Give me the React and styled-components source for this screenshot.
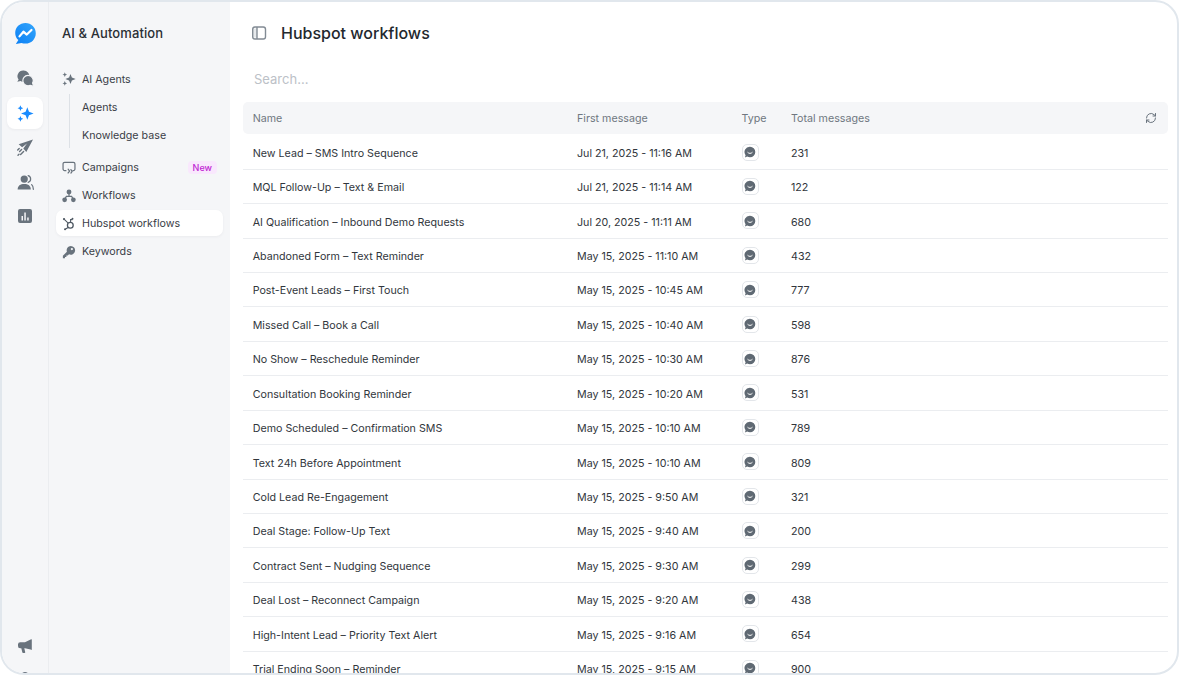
import React from "react";
import styled, { createGlobalStyle } from "styled-components";

const Global = createGlobalStyle`
  html, body { margin: 0; padding: 0; background: #fff; height: 100%; overflow: hidden; }
  #root { height: 100%; }
  * { box-sizing: border-box; }
`;

const Frame = styled.div`
  width: 1179px; height: 675px; display: flex; overflow: hidden;
  border: 2px solid #e1e7ed; border-radius: 24px; background: #fff;
  font-family: Inter, "Liberation Sans", sans-serif; color: #2b3036;
`;
const Rail = styled.nav`
  width: 47px; flex: none; background: #f5f6f8; border-right: 1px solid #ebedf0;
  display: flex; flex-direction: column; align-items: center; padding-top: 21px;
`;
const RailButton = styled.div`
  width: 36px; height: ${p => p.$h || 32}px; flex: none; display: flex; align-items: center; justify-content: center;
  border-radius: 8px; margin-top: ${p => p.$mt || 0}px;
  background: ${p => (p.$active ? "#fff" : "transparent")};
  box-shadow: ${p => (p.$active ? "0 1px 3px rgba(30,40,60,.05)" : "none")};
`;
const RailBottom = styled.div`
  margin-top: auto; margin-bottom: -17px; display: flex; flex-direction: column; align-items: center; gap: 10px;
`;
const Avatar = styled.div`
  width: 12px; height: 18px; border-radius: 50%; background: #6b7580;
`;
const Side = styled.aside`
  width: 181px; flex: none; background: #f5f6f8; padding: 21px 7px 0;
`;
const SideTitle = styled.h2`
  margin: 0 0 23px 6px; font-size: 13px; line-height: 20px; font-weight: 500; color: #2a2f35; letter-spacing: .1px;
`;
const Item = styled.div`
  height: 26px; margin-bottom: 2px; display: flex; align-items: center; padding: ${p => (p.$low ? "1px" : "0")} 0 0 6px; gap: 6px;
  border-radius: 7px; font-size: 10.7px; color: #3a4047;
  background: ${p => (p.$active ? "#fff" : "transparent")};
  box-shadow: ${p => (p.$active ? "0 1px 3px rgba(30,40,60,.05)" : "none")};
`;
const ItemIcon = styled.span`
  width: 14px; height: 14px; display: flex; flex: none;
`;
const SubList = styled.div`
  margin: 0 0 6px 13px; padding: 0 0 0 12px; border-left: 1px solid #dde1e6;
`;
const SubItem = styled.div`
  height: 26px; margin-bottom: 2px; display: flex; align-items: center; font-size: 10.7px; color: #3a4047;
`;
const Badge = styled.span`
  margin-left: auto; margin-right: 6px; height: 13px; padding: 0 5px; border-radius: 4px; display: flex; align-items: center;
  background: #f9e8fd; color: #c026d3; font-size: 9px; font-weight: 500;
`;
const Main = styled.main`
  flex: 1; min-width: 0; padding: 0 9px 0 13px; display: flex; flex-direction: column;
`;
const Head = styled.header`
  height: 62px; flex: none; display: flex; align-items: center; gap: 14px; padding: 0 0 0 8px;
`;
const Title = styled.h1`
  margin: 0; font-size: 16px; font-weight: 500; color: #23282e; line-height: 24px;
`;
const Search = styled.input`
  height: 30px; border: 0; outline: 0; padding: 0 0 0 11px; margin: 0 0 8px; background: transparent;
  font: 400 13px Inter, sans-serif; flex: none;
  &::placeholder { color: #bcc1c7; opacity: 1; }
`;
const cols = "324.3px 164.5px 49.5px 1fr 23px";
const HeaderRow = styled.div`
  height: 32.3px; margin-bottom: 1px; flex: none; display: grid; grid-template-columns: ${cols}; align-items: center; padding-left: 9.7px;
  background: #f5f6f8; border-radius: 5px; font-size: 10.7px; color: #6f7780;
`;
const Row = styled.div`
  height: 34.43px; flex: none; display: grid; grid-template-columns: ${cols}; align-items: center; padding: 2.6px 0 0 9.7px;
  border-bottom: 1px solid #ebedf0; font-size: 10.7px; color: #31363c;
`;
const TypeChip = styled.span`
  width: 17px; height: 17px; margin: -2.6px 0 0 .4px; display: flex; align-items: center; justify-content: center;
  border: 1px solid #e3e6ea; border-radius: 5px; background: #fff;
`;
const Refresh = styled.span`
  display: flex; justify-content: flex-start;
`;

const G = "#69737d";
const BG = "#f5f6f8";
const Svg = ({ s = 16, c = G, children, ...r }) => (
  <svg width={s} height={s} viewBox="0 0 16 16" fill={c} {...r}>{children}</svg>
);
const Logo = () => (
  <svg width="21" height="21" viewBox="0 0 20 20">
    <defs><linearGradient id="lg" x1="0" y1="1" x2="1" y2="0"><stop offset="0" stopColor="#0a7ff5" /><stop offset="1" stopColor="#35a6fb" /></linearGradient></defs>
    <path fill="url(#lg)" d="M10 0C4.500 0 .2 4.100.2 9.500c0 2.800 1.100 5.100 3 6.800L.8 20l5.400-1c1.200.4 2.500.6 3.800.6 5.500 0 9.800-4.300 9.800-9.900S15.500 0 10 0z" />
    <path fill="none" stroke="#fff" strokeWidth="2.100" strokeLinecap="round" strokeLinejoin="round" d="M4.300 12.700 8 8.300l3.200 2.700 4.500-4.300" />
  </svg>
);
const Chat = () => (
  <svg width="17" height="17" viewBox="0 0 17 17" fill={G}>
    <path d="M6.200.5a5.700 5.700 0 0 0-4.600 9.100L.3 11.800l3.300-.8a5.700 5.700 0 1 0 2.600-10.500z" />
    <path stroke={BG} strokeWidth="1.200" d="M11 5.400a5.200 5.200 0 1 0 2.300 9.900l3.400 1.100-1.100-3.300A5.200 5.200 0 0 0 11 5.400z" />
  </svg>
);
const Sparkles = ({ c = "#1a8cff", s = 17 }) => (
  <Svg s={s} c={c}>
    <path d="M9.700 2.200 11.300 6.400 15.600 8l-4.300 1.600-1.600 4.200-1.600-4.200L3.800 8l4.300-1.600z" />
    <path d="M3.200.3l.8 1.900 1.900.8-1.900.8-.8 1.900-.8-1.900L.5 3l1.900-.8zM3.200 10.300l.8 1.900 1.900.8-1.900.8-.8 1.900-.8-1.900-1.900-.8 1.900-.8z" />
  </Svg>
);
const Plane = () => (
  <svg width="18" height="18" viewBox="0 0 18 18" fill={G}>
    <path d="M17 .6 2.700 5.200l3.400 3L11 4.500 7.300 9.400l3 3.600z" />
    <path fill="none" stroke={G} strokeWidth="1.400" strokeLinecap="round" d="M5.600 10.600 3.600 12.600M7.600 12.400l-3 3.200M3.200 9.600 1.700 11.100M3 15.200l-1 1" />
  </svg>
);
const Users = () => (
  <Svg s={17}>
    <circle cx="6.800" cy="4.800" r="3.400" />
    <path d="M.6 14.600c0-3.500 2.500-5.200 6.200-5.200s6.200 1.700 6.200 5.200z" />
    <path fill="none" stroke={G} strokeWidth="1.200" strokeLinecap="round" d="M10.500 1.600a3.300 3.300 0 0 1 0 6.300M13.800 10c1 .8 1.600 2.200 1.600 4.400" />
  </Svg>
);
const Chart = () => (
  <Svg s={16}>
    <path fillRule="evenodd" d="M3 1h10a2 2 0 0 1 2 2v10a2 2 0 0 1-2 2H3a2 2 0 0 1-2-2V3a2 2 0 0 1 2-2zm1.500 7v4.500H6V8zm2.800-3.500v8h1.500v-8zm2.900 5v3h1.500v-3z" />
  </Svg>
);
const Mega = () => (
  <Svg s={16}>
    <path d="M14.800 1.200v10.800l-1.200-.4L8 10.300H7.300l.9 3.600a.8.800 0 0 1-.8 1H6.100a.8.800 0 0 1-.8-.6l-1-4H3.200A2.200 2.200 0 0 1 1 8V6.400a2.200 2.200 0 0 1 2.200-2.200H8l5.600-2.600z" />
  </Svg>
);
const Loop = () => (
  <Svg s={14}>
    <path fill="none" stroke={G} strokeWidth="1.400" strokeLinecap="round" strokeLinejoin="round" d="M4.500 11H3a1.800 1.800 0 0 1-1.800-1.800V3.300A1.800 1.800 0 0 1 3 1.500h10a1.800 1.800 0 0 1 1.800 1.800v5.900A1.800 1.800 0 0 1 13 11h-.5" />
    <path fill="none" stroke={G} strokeWidth="1.400" strokeLinecap="round" strokeLinejoin="round" d="M7 9.300 8.700 11.500 7 13.700M10.200 9.800l1.400 2-1.400 2" />
  </Svg>
);
const Flow = () => (
  <Svg s={14}>
    <circle cx="8" cy="3.400" r="2.800" /><circle cx="3" cy="12.300" r="2.700" /><circle cx="13" cy="12.300" r="2.700" />
    <path fill="none" stroke={G} strokeWidth="1.400" d="M8 5v3.500M3.500 11 5 8.500h6l1.500 2.500" />
  </Svg>
);
const Hub = () => (
  <Svg s={14} c="#4f5963">
    <circle cx="9.500" cy="9.500" r="3.300" fill="none" stroke="#4f5963" strokeWidth="1.500" />
    <circle cx="2.300" cy="2.300" r="1.300" /><circle cx="12" cy="2" r="1.100" /><circle cx="3.500" cy="14" r="1.200" />
    <path fill="none" stroke="#4f5963" strokeWidth="1.200" d="M2.700 2.800 7 7M9.800 6V3h2.200M7 12l-3 1.800" />
  </Svg>
);
const Key = () => (
  <Svg s={14}>
    <path d="M10 1a5 5 0 1 1-2 9.600L6.600 12H5v1.600H3.400V15H1v-2.800l4.600-4.600A5 5 0 0 1 10 1zm1.300 2.400a1.300 1.300 0 1 0 0 2.600 1.300 1.300 0 0 0 0-2.600z" />
  </Svg>
);
const Panel = () => (
  <svg width="16" height="16" viewBox="0 0 16 16" fill="none" stroke="#828b94" strokeWidth="1.400">
    <path d="M2 3.500h4v9H2z" fill="#e6e9ec" stroke="none" />
    <rect x="1.700" y="2" width="12.800" height="12" rx="2.200" /><path d="M6 2v12" />
  </svg>
);
const Refr = () => (
  <svg width="12" height="12" viewBox="0 0 24 24" fill="none" stroke="#69737d" strokeWidth="2" strokeLinecap="round" strokeLinejoin="round">
    <path d="M3 12a9 9 0 0 1 15-6.700L21 8" /><path d="M21 3v5h-5" /><path d="M21 12a9 9 0 0 1-15 6.700L3 16" /><path d="M8 16H3v5" />
  </svg>
);
const Wa = () => (
  <svg width="12" height="12" viewBox="0 0 12 12">
    <path fill="#5f6973" d="M6 .7a5.300 5.300 0 0 1 0 10.600c-1 0-2-.2-2.800-.7l-2.300.8.700-2.200A5.300 5.300 0 0 1 6 .7z" />
    <path fill="none" stroke="#fff" strokeWidth="1" strokeLinecap="round" d="M3.800 6.500c1.200 1.300 3.200 1.300 4.400 0" />
  </svg>
);

const rows = [
  ["New Lead – SMS Intro Sequence", "Jul 21, 2025 - 11:16 AM", 231],
  ["MQL Follow-Up – Text & Email", "Jul 21, 2025 - 11:14 AM", 122],
  ["AI Qualification – Inbound Demo Requests", "Jul 20, 2025 - 11:11 AM", 680],
  ["Abandoned Form – Text Reminder", "May 15, 2025 - 11:10 AM", 432],
  ["Post-Event Leads – First Touch", "May 15, 2025 - 10:45 AM", 777],
  ["Missed Call – Book a Call", "May 15, 2025 - 10:40 AM", 598],
  ["No Show – Reschedule Reminder", "May 15, 2025 - 10:30 AM", 876],
  ["Consultation Booking Reminder", "May 15, 2025 - 10:20 AM", 531],
  ["Demo Scheduled – Confirmation SMS", "May 15, 2025 - 10:10 AM", 789],
  ["Text 24h Before Appointment", "May 15, 2025 - 10:10 AM", 809],
  ["Cold Lead Re-Engagement", "May 15, 2025 - 9:50 AM", 321],
  ["Deal Stage: Follow-Up Text", "May 15, 2025 - 9:40 AM", 200],
  ["Contract Sent – Nudging Sequence", "May 15, 2025 - 9:30 AM", 299],
  ["Deal Lost – Reconnect Campaign", "May 15, 2025 - 9:20 AM", 438],
  ["High-Intent Lead – Priority Text Alert", "May 15, 2025 - 9:16 AM", 654],
  ["Trial Ending Soon – Reminder", "May 15, 2025 - 9:15 AM", 900],
];

export default function App() {
  return (
    <>
      <Global />
      <Frame>
        <Rail>
          <RailButton $h={20}><Logo /></RailButton>
          <RailButton $mt={19}><Chat /></RailButton>
          <RailButton $active $mt={3}><Sparkles /></RailButton>
          <RailButton $mt={3}><Plane /></RailButton>
          <RailButton $mt={2}><Users /></RailButton>
          <RailButton $mt={2}><Chart /></RailButton>
          <RailBottom>
            <RailButton><Mega /></RailButton>
            <Avatar />
          </RailBottom>
        </Rail>
        <Side>
          <SideTitle>AI &amp; Automation</SideTitle>
          <Item><ItemIcon><Sparkles c={G} s={14} /></ItemIcon>AI Agents</Item>
          <SubList>
            <SubItem>Agents</SubItem>
            <SubItem>Knowledge base</SubItem>
          </SubList>
          <Item $low><ItemIcon><Loop /></ItemIcon>Campaigns<Badge>New</Badge></Item>
          <Item $low><ItemIcon><Flow /></ItemIcon>Workflows</Item>
          <Item $low $active><ItemIcon><Hub /></ItemIcon>Hubspot workflows</Item>
          <Item $low><ItemIcon><Key /></ItemIcon>Keywords</Item>
        </Side>
        <Main>
          <Head><Panel /><Title>Hubspot workflows</Title></Head>
          <Search placeholder="Search..." />
          <HeaderRow>
            <span>Name</span><span>First message</span><span>Type</span><span>Total messages</span>
            <Refresh><Refr /></Refresh>
          </HeaderRow>
          {rows.map(r => (
            <Row key={r[0]}>
              <span>{r[0]}</span><span>{r[1]}</span>
              <TypeChip><Wa /></TypeChip>
              <span>{r[2]}</span>
            </Row>
          ))}
        </Main>
      </Frame>
    </>
  );
}
